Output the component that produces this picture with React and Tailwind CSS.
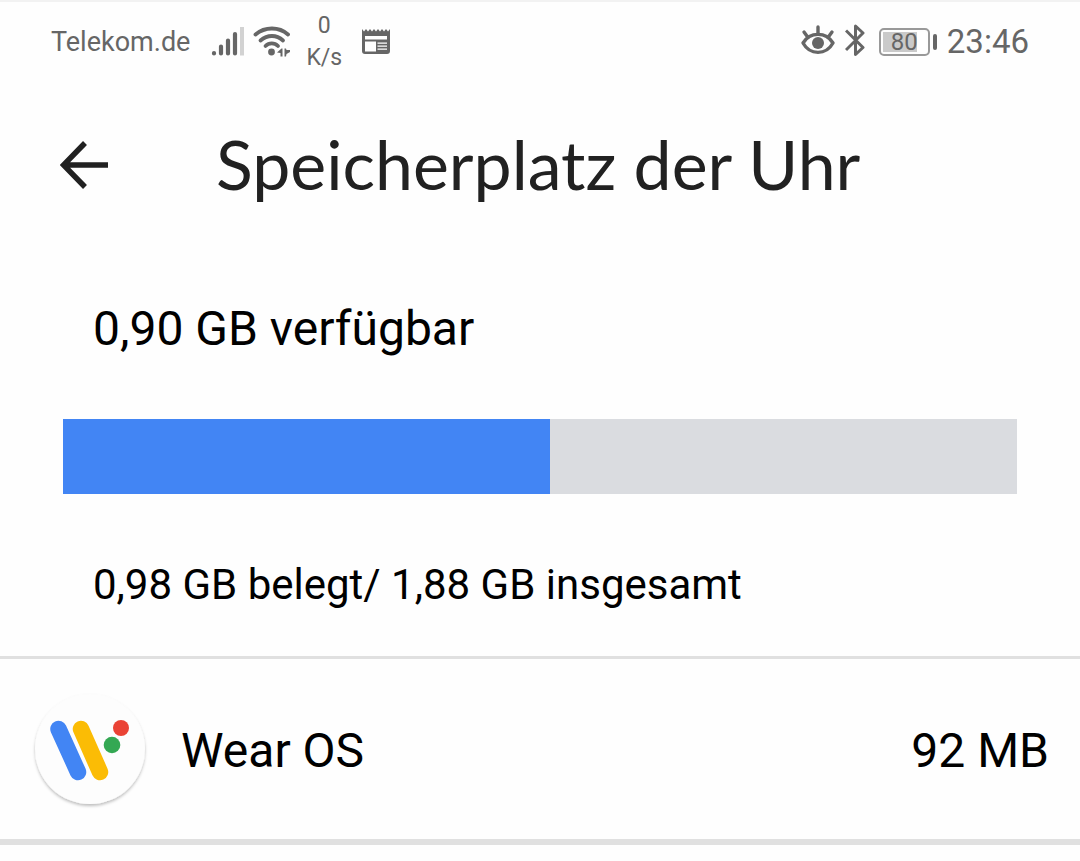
const storage = {
    available: "0,90 GB verfügbar",
    summary: "0,98 GB belegt/ 1,88 GB insgesamt",
    usedPercent: 51,
};

const apps = [{ id: "wear-os", name: "Wear OS", size: "92 MB" }];

function SignalIcon() {
    return (
        <svg width="34" height="32" viewBox="0 0 34 32" className="shrink-0" aria-hidden="true">
            <g stroke="#666" strokeWidth="4.2" strokeLinecap="round">
                <path d="M4 27v.5M11 20.5v7M18 14.5v13M25 8v19.5" />
            </g>
            <path d="M32 1v28.500" stroke="#d2d2d2" strokeWidth="4" />
        </svg>
    );
}

function WifiIcon() {
    return (
        <svg width="38" height="32" viewBox="0 0 38 32" className="shrink-0" aria-hidden="true">
            <g fill="none" stroke="#666" strokeWidth="3.8" strokeLinecap="round">
                <path d="M3.500 8.500C13 .5 27 .5 36 8.500" />
                <path d="M8.500 14.500C15.500 8.500 24.500 8.500 31 14.500" />
                <path d="M13.500 20C17 16.500 22.500 16.500 26 20" />
            </g>
            <circle cx="19.500" cy="26" r="3.4" fill="#666" />
            <path d="M25 26.500l4.500-4h1v8h-2v-3.500zM32.500 22.500v8h1.500l.5-2.500 3.500-2v-2h-3.500l-.5-1.500z" fill="#666" />
        </svg>
    );
}

function NewsIcon() {
    return (
        <svg width="28" height="28" viewBox="0 0 28 28" className="shrink-0" aria-hidden="true">
            <path
                d="M0 1l2 2.500 2-2.500 2 2.500 2-2.500 2 2.500 2-2.500 2 2.500 2-2.500 2 2.500 2-2.500 2 2.500 2-2.500 2 2.500 2-2.500v22a3 3 0 0 1-3 3H3a3 3 0 0 1-3-3z"
                fill="#666"
            />
            <path d="M3 8h22v3.500H3zM3 13.500h11v10H3zM15.500 14.500h9.500v1.200h-9.500zM15.500 17.500h9.500v1.200h-9.500zM15.500 20.500h9.500v1.200h-9.500z" fill="#fff" />
        </svg>
    );
}

function EyeIcon() {
    return (
        <svg width="34" height="32" viewBox="0 0 34 32" className="shrink-0" aria-hidden="true">
            <g fill="none" stroke="#666" strokeWidth="3.4" strokeLinecap="round">
                <path d="M2 18C9 6.500 25 6.500 32 18C25 30.500 9 30.500 2 18z" strokeLinejoin="round" />
                <path d="M17 2v6M3 7l4 5.500M31 7l-4 5.500" />
            </g>
            <circle cx="17" cy="18" r="6" fill="#666" />
        </svg>
    );
}

function BluetoothIcon() {
    return (
        <svg width="20" height="34" viewBox="0 0 20 34" className="shrink-0" aria-hidden="true">
            <path
                d="M1 6.500L18 23.500L10.500 30.500V2L18 9L1 26"
                fill="none"
                stroke="#666"
                strokeWidth="3"
                strokeLinejoin="round"
            />
        </svg>
    );
}

function Battery() {
    return (
        <div className="flex items-center gap-[3px]">
            <div className="flex h-7 w-[51px] rounded-[5px] border-2 border-[#999] p-[2px]">
                <div className="flex grow items-center justify-center bg-[linear-gradient(to_right,#cacaca_80%,white_80%)] text-2xl leading-none">
                    80
                </div>
            </div>
            <div className="h-4 w-1 rounded-sm bg-[#666]" />
        </div>
    );
}

function StatusBar() {
    return (
        <div className="flex h-[82px] items-center justify-between border-t-2 border-[#f2f2f2] px-[51px] text-[#666]">
            <div className="flex items-center">
                <span className="text-[27px]">Telekom.de</span>
                <div className="ml-5 flex items-center gap-2">
                    <SignalIcon />
                    <WifiIcon />
                </div>
                <div className="ml-4 text-center text-[23px] leading-8">
                    <div>0</div>
                    <div>K/s</div>
                </div>
                <div className="ml-5">
                    <NewsIcon />
                </div>
            </div>
            <div className="flex items-center gap-[10px]">
                <div className="flex items-center gap-[10px] pr-1 pb-[2px]">
                    <EyeIcon />
                    <BluetoothIcon />
                </div>
                <Battery />
                <span className="text-[33px]">23:46</span>
            </div>
        </div>
    );
}

function Header() {
    return (
        <header className="flex h-[166px] items-center pl-[60px]">
            <button type="button" aria-label="Zurück" className="shrink-0">
                <svg width="48" height="48" viewBox="0 0 48 48" aria-hidden="true">
                    <path d="M25 2L3.5 24L25 46M4 24h44" fill="none" stroke="#212121" strokeWidth="5.5" />
                </svg>
            </button>
            <h1 className="ml-[108px] pb-[2px] font-[Lato,sans-serif] text-[68px] leading-none whitespace-nowrap text-[#212121]">
                Speicherplatz der Uhr
            </h1>
        </header>
    );
}

function WearOsLogo() {
    return (
        <svg width="120" height="124" viewBox="0 1 120 124" className="shrink-0" aria-hidden="true">
            <defs>
                <filter id="logo-shadow" x="-10%" y="-10%" width="120%" height="120%">
                    <feDropShadow dx="0" dy="2" stdDeviation="1.5" floodColor="#000" floodOpacity="0.25" />
                </filter>
            </defs>
            <circle cx="60" cy="61" r="55" fill="#fdfdfd" filter="url(#logo-shadow)" />
            <g strokeWidth="16.5" strokeLinecap="round">
                <path d="M51 41L70 84" stroke="#fbbc05" />
                <path d="M28.5 41L48 84" stroke="#4285f4" />
            </g>
            <circle cx="91" cy="40" r="8" fill="#ea4335" />
            <circle cx="82" cy="57" r="8.3" fill="#34a853" />
        </svg>
    );
}

function AppRow({ app }) {
    return (
        <li className="flex h-[189px] items-center justify-between border-t-[3px] border-b-[6px] border-[#e0e0e0] pt-1 pr-[31px] pl-[30px] text-5xl">
            <div className="flex items-center gap-[31px]">
                <WearOsLogo />
                <span>{app.name}</span>
            </div>
            <span>{app.size}</span>
        </li>
    );
}

export default function App() {
    return (
        <div className="min-h-screen bg-[#fefefe] font-[Roboto,sans-serif] text-black">
            <StatusBar />
            <Header />
            <main>
                <section className="px-[63px] pt-[51px] pb-[41px]">
                    <p className="pl-[30px] text-5xl leading-[60px]">{storage.available}</p>
                    <div
                        role="progressbar"
                        aria-label="Speicherplatz"
                        aria-valuenow={storage.usedPercent}
                        className="mt-[60px] h-[75px] bg-[#dadce0]"
                    >
                        <div className="h-full bg-[#4285f4]" style={{ width: `${storage.usedPercent}%` }} />
                    </div>
                    <p className="mt-[61px] pl-[30px] text-[42px] leading-[60px]">{storage.summary}</p>
                </section>
                <ul>
                    {apps.map((app) => (
                        <AppRow key={app.id} app={app} />
                    ))}
                </ul>
            </main>
        </div>
    );
}
